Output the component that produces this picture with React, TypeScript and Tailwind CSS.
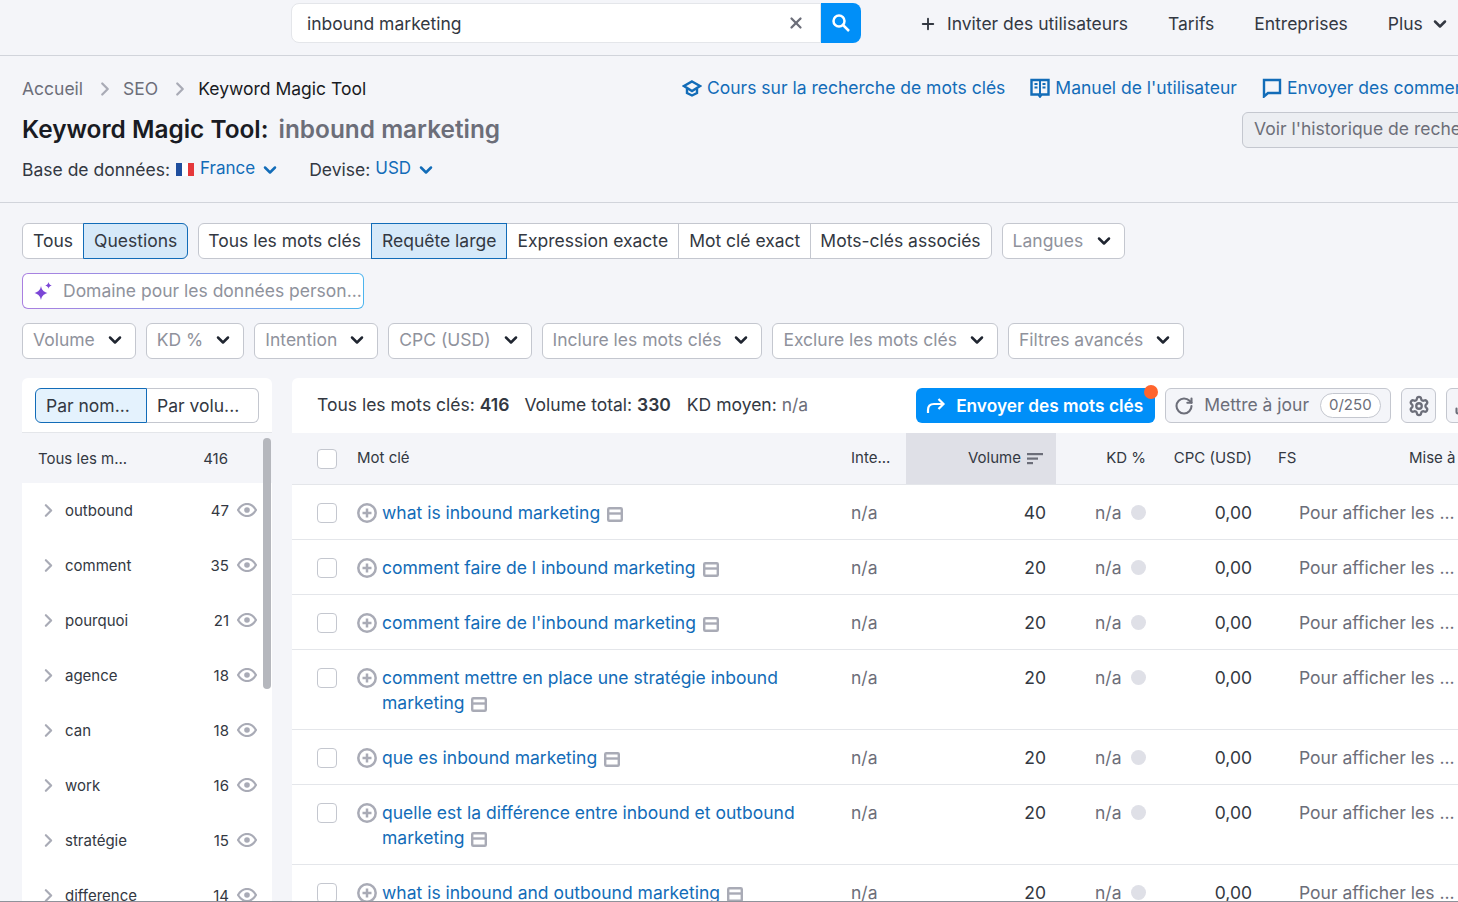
import { ChevronDown, ChevronRight, Download, Plus, RotateCw, Settings, X } from "lucide-react";

const linkBlue = "text-[#126cb8]";

function Caret({ className = "text-[#1f2530]" }: { className?: string }) {
  return <ChevronDown className={`h-5 w-5 shrink-0 ${className}`} strokeWidth={3} />;
}

function SerpIcon() {
  return (
    <svg viewBox="0 0 16 15" className="ml-[7px] inline-block h-[15px] w-[16px] align-[-3px]" fill="none" stroke="#a9abb6" strokeWidth="2.400">
      <rect x="1.200" y="1.200" width="13.600" height="12.600" rx="1" />
      <path d="M1 6.500h14" />
    </svg>
  );
}

function AddIcon() {
  return (
    <svg viewBox="0 0 20 20" className="mr-[5px] mt-[3px] h-5 w-5 shrink-0" fill="none" stroke="#a9abb6" strokeWidth="2.500">
      <circle cx="10" cy="10" r="8.700" />
      <path d="M10 5.500v9M5.500 10h9" />
    </svg>
  );
}

function EyeIcon() {
  return (
    <svg viewBox="0 0 20 14" className="mb-[2px] ml-[8px] h-[14px] w-5 shrink-0" fill="none" stroke="#a9abb6" strokeWidth="2.200">
      <path d="M1 7c2.500-4 5.500-6 9-6s6.500 2 9 6c-2.500 4-5.500 6-9 6s-6.500-2-9-6Z" />
      <circle cx="10" cy="7" r="2.800" fill="#a9abb6" stroke="none" />
    </svg>
  );
}

function Checkbox() {
  return <span className="block h-5 w-5 rounded-[4px] border border-[#c4c7cf] bg-white" />;
}

const groups = [
  ["outbound", "47"],
  ["comment", "35"],
  ["pourquoi", "21"],
  ["agence", "18"],
  ["can", "18"],
  ["work", "16"],
  ["stratégie", "15"],
  ["difference", "14"],
];

const rows = [
  { kw: "what is inbound marketing", vol: "40", h: "h-[55px]" },
  { kw: "comment faire de l inbound marketing", vol: "20", h: "h-[55px]" },
  { kw: "comment faire de l'inbound marketing", vol: "20", h: "h-[55px]" },
  { kw: "comment mettre en place une stratégie inbound marketing", vol: "20", h: "h-[80px]" },
  { kw: "que es inbound marketing", vol: "20", h: "h-[55px]" },
  { kw: "quelle est la différence entre inbound et outbound marketing", vol: "20", h: "h-[80px]" },
  { kw: "what is inbound and outbound marketing", vol: "20", h: "h-[55px]" },
];

export default function App() {
  return (
    <div className="h-[902px] w-[1458px] overflow-hidden border-b border-[#8f929a] bg-[#f4f5f9] font-['Inter',sans-serif] text-[17.5px] text-[#333842]">
      <header className="flex h-[56px] items-start border-b border-[#d1d4db] pl-[291px] pt-[3px]">
        <div className="flex h-10 w-[530px] items-center justify-between rounded-l-[8px] border border-[#e4e6ea] bg-white pl-[15px] pr-[15px]">
          <span className="pt-[2px]">inbound marketing</span>
          <X className="h-[18px] w-[18px] text-[#6c6e79]" strokeWidth={3} />
        </div>
        <div className="flex h-10 w-10 items-center justify-center rounded-r-[8px] bg-[#008ff8]">
          <svg viewBox="0 0 20 20" className="h-5 w-5" fill="none" stroke="#fff" strokeWidth="2.500">
            <circle cx="8" cy="8" r="5.500" />
            <path d="m12 12 6 6" />
          </svg>
        </div>
        <nav className="flex h-10 items-center whitespace-nowrap pl-[58px] pt-[2px]">
          <Plus className="mr-[10px] h-[18px] w-[18px]" strokeWidth={2.5} />
          <span className="mr-[40px]">Inviter des utilisateurs</span>
          <span className="mr-[40px]">Tarifs</span>
          <span className="mr-[40px]">Entreprises</span>
          <span className="mr-[7px]">Plus</span>
          <Caret className="text-[#333842]" />
        </nav>
      </header>

      <section className="flex h-[147px] border-b border-[#d1d4db] px-[22px] pt-[20px]">
        <div className="w-[660px] shrink-0 pt-px">
          <div className="flex h-6 items-center text-[#6c6e79]">
            <span>Accueil</span>
            <ChevronRight className="ml-[11px] mr-[7px] h-[22px] w-[22px] text-[#a9abb6]" strokeWidth={2.5} />
            <span>SEO</span>
            <ChevronRight className="ml-[11px] mr-[7px] h-[22px] w-[22px] text-[#a9abb6]" strokeWidth={2.5} />
            <span className="text-[#191b23]">Keyword Magic Tool</span>
          </div>
          <h1 className="mt-[10px] flex h-9 items-center text-[24.400px] font-semibold text-[#191b23]">
            Keyword Magic Tool:
            <span className="ml-[10px] text-[#6c6e79]">inbound marketing</span>
          </h1>
          <div className="mt-[9px] flex items-center">
            <span>Base de données:</span>
            <svg viewBox="0 0 18 13" className="ml-[6px] mr-[6px] h-[13px] w-[18px]">
              <rect width="6" height="13" fill="#1f4e9e" />
              <rect x="6" width="6" height="13" fill="#fff" />
              <rect x="12" width="6" height="13" fill="#e5383b" />
            </svg>
            <span className={`pb-[2px] text-[17px] ${linkBlue}`}>France</span>
            <Caret className={`ml-[5px] ${linkBlue}`} />
            <span className="ml-[29px]">Devise:</span>
            <span className={`ml-[5px] pb-[2px] text-[17px] ${linkBlue}`}>USD</span>
            <Caret className={`ml-[5px] ${linkBlue}`} />
          </div>
        </div>
        <div className="whitespace-nowrap">
          <div className={`flex h-6 items-center ${linkBlue}`}>
            <svg viewBox="0 0 20 20" className="mr-[5px] h-5 w-5" fill="none" stroke="#126cb8" strokeWidth="2.400">
              <path d="M10 3.500 18 8l-8 5-8-5 8-4.500Z" />
              <path d="M5 10.500v4.500l5 2.500 5-2.500v-4.500" />
            </svg>
            <span className="mr-[25px]">Cours sur la recherche de mots clés</span>
            <svg viewBox="0 0 20 20" className="mr-[5px] h-5 w-5" fill="none" stroke="#126cb8" strokeWidth="2.400">
              <path d="M1.500 2h17v14.500h-7l-1.500 2-1.500-2h-7V2Z" />
              <path d="M10 2v14M4.500 6h3M4.500 9.500h3M12.500 6h3M12.500 9.500h3" strokeWidth="2" />
            </svg>
            <span className="mr-[25px]">Manuel de l'utilisateur</span>
            <svg viewBox="0 0 20 20" className="mr-[5px] h-5 w-5" fill="none" stroke="#126cb8" strokeWidth="2.400">
              <path d="M2 2h16v13H6l-4 3.500V2Z" />
            </svg>
            <span>Envoyer des commentaires</span>
          </div>
          <div className="ml-[560px] mt-[12px] flex h-[36px] w-[300px] items-center rounded-[6px] border border-[#c4c7cf] bg-[#eceef2] pb-[2px] pl-[11px] text-[#6c6e79]">
            Voir l'historique de recherche
          </div>
        </div>
      </section>

      <div className="px-[22px] pt-[20px]">
        <div className="flex h-9 whitespace-nowrap">
          <div className="flex rounded-[6px] border border-[#c4c7cf] bg-white">
            <span className="flex items-center pl-[10px] pr-[11px]">Tous</span>
            <span className="-m-px flex items-center rounded-r-[6px] border border-[#126cb8] bg-[#d6e9f9] px-[10px]">Questions</span>
          </div>
          <div className="ml-[10px] flex rounded-[6px] border border-[#c4c7cf] bg-white">
            <span className="flex items-center pl-[9px] pr-[10px]">Tous les mots clés</span>
            <span className="-my-px flex items-center border border-[#126cb8] bg-[#d6e9f9] px-[10px]">Requête large</span>
            <span className="flex items-center border-r border-[#c4c7cf] px-[10px]">Expression exacte</span>
            <span className="flex items-center border-r border-[#c4c7cf] px-[10px]">Mot clé exact</span>
            <span className="flex items-center pl-[9px] pr-[10px]">Mots-clés associés</span>
          </div>
          <div className="ml-[10px] flex w-[123px] items-center justify-between rounded-[6px] border border-[#c4c7cf] bg-white px-[10px] text-[#8f929c]">
            Langues
            <Caret />
          </div>
        </div>

        <div className="mt-[14px] h-[36px] w-[342px] rounded-[6px] bg-gradient-to-r from-[#a97fe0] to-[#4cb4ee] p-px">
          <div className="flex h-full items-center rounded-[5px] bg-white pl-[10px] text-[#8f929c]">
            <svg viewBox="0 0 20 20" className="mr-[10px] h-5 w-5 shrink-0" fill="#7b46d6">
              <path d="M8 5c.7 3.800 2.200 5.500 6.500 7-4.300 1.500-5.800 3.200-6.500 7-.7-3.800-2.200-5.500-6.500-7C5.800 10.500 7.300 8.800 8 5Z" />
              <path d="M15.500 1c.4 2 1.200 2.800 3.300 3.400-2.100.6-2.900 1.400-3.300 3.400-.4-2-1.200-2.800-3.300-3.400 2.100-.6 2.900-1.400 3.300-3.400Z" />
            </svg>
            <span className="whitespace-nowrap">Domaine pour les données person...</span>
          </div>
        </div>

        <div className="mt-[14px] flex h-9 gap-[10px] whitespace-nowrap text-[#8f929c]">
          {["Volume", "KD %", "Intention", "CPC (USD)", "Inclure les mots clés", "Exclure les mots clés", "Filtres avancés"].map((f) => (
            <div key={f} className="flex items-center gap-[10px] rounded-[6px] border border-[#c4c7cf] bg-white pb-[2px] pl-[10px] pr-[10px]">
              {f}
              <Caret />
            </div>
          ))}
        </div>

        <div className="mt-[19px] flex gap-[20px]">
          <aside className="w-[250px] shrink-0 rounded-t-[6px] bg-white">
            <div className="flex h-[55px] items-start border-b border-[#e4e6ea] px-[13px] pt-[10px]">
              <span className="flex h-[35px] w-[112px] items-center rounded-l-[6px] border border-[#126cb8] bg-[#e4f2fd] pl-[10px] pt-px">Par nom...</span>
              <span className="flex h-[35px] w-[112px] items-center rounded-r-[6px] border border-l-0 border-[#c4c7cf] pl-[10px] pt-px">Par volu...</span>
            </div>
            <div className="relative text-[15px]">
              <div className="flex h-[50px] items-center justify-between bg-[#f4f5f9] pl-4 pr-[44px] pt-[2px]">
                <span>Tous les m...</span>
                <span>416</span>
              </div>
              {groups.map(([name, count]) => (
                <div key={name} className="flex h-[55px] items-center pl-[16px] pr-[15px] pt-px">
                  <ChevronRight className="mb-[2px] h-[21px] w-[21px] shrink-0 text-[#a9abb6]" strokeWidth={2.5} />
                  <span className="ml-[6px] flex-1">{name}</span>
                  <span>{count}</span>
                  <EyeIcon />
                </div>
              ))}
              <div className="absolute right-px top-[5px] h-[251px] w-2 rounded-full bg-[#b5b7bd]" />
            </div>
          </aside>

          <main className="w-[1200px] shrink-0 rounded-t-[6px] bg-white">
            <div className="flex h-[55px] items-center whitespace-nowrap pl-[25px]">
              <span>Tous les mots clés: <b className="font-semibold">416</b></span>
              <span className="ml-[15px]">Volume total: <b className="font-semibold">330</b></span>
              <span className="ml-[16px]">KD moyen: <span className="text-[#6c6e79]">n/a</span></span>
              <div className="relative ml-[108px] flex h-[35px] w-[239px] shrink-0 items-center rounded-[6px] bg-[#008ff8] pl-[10px] text-[17.300px] font-semibold text-white">
                <svg viewBox="0 0 20 20" className="mr-[10px] h-5 w-5" fill="none" stroke="#fff" strokeWidth="2.200">
                  <path d="M2 17v-3c0-4 2.500-6 6-6h9M12.500 3l5 5-5 5" />
                </svg>
                Envoyer des mots clés
                <span className="absolute -right-[3px] -top-[3px] h-[14px] w-[14px] rounded-full bg-[#ff642d]" />
              </div>
              <div className="ml-[10px] flex h-[35px] w-[226px] shrink-0 items-center rounded-[6px] border border-[#c4c7cf] bg-[#f4f5f9] pl-[8px] text-[#6c6e79]">
                <RotateCw className="mr-[10px] h-5 w-5" strokeWidth={2.5} />
                Mettre à jour
                <span className="ml-[11px] rounded-full border border-[#c4c7cf] bg-white px-[8px] text-[15px]">0/250</span>
              </div>
              <div className="ml-[10px] flex h-[35px] w-[35px] shrink-0 items-center justify-center rounded-[6px] border border-[#c4c7cf] bg-[#f4f5f9] text-[#6c6e79]">
                <Settings className="h-[22px] w-[22px]" strokeWidth={2.5} />
              </div>
              <div className="ml-[10px] flex h-[35px] w-[35px] shrink-0 items-center justify-center rounded-[6px] border border-[#c4c7cf] bg-[#f4f5f9] text-[#6c6e79]">
                <Download className="h-5 w-5" strokeWidth={2.5} />
              </div>
            </div>

            <div className="flex h-[52px] items-stretch border-b border-[#e4e6ea] bg-[#f4f5f9] text-[15px]">
              <div className="flex w-[65px] items-center pl-[25px]"><Checkbox /></div>
              <div className="flex w-[494px] items-center">Mot clé</div>
              <div className="flex w-[55px] items-center">Inte...</div>
              <div className="flex w-[150px] items-center justify-end bg-[#dfe0e7] pr-[13px]">
                Volume
                <svg viewBox="0 0 16 12" className="ml-[6px] h-3 w-4" fill="#6c6e79">
                  <rect width="16" height="2.200" />
                  <rect y="4.500" width="11" height="2.200" />
                  <rect y="9" width="6" height="2.200" />
                </svg>
              </div>
              <div className="flex w-[90px] items-center justify-end">KD %</div>
              <div className="flex w-[106px] items-center justify-end">CPC (USD)</div>
              <div className="flex w-[157px] items-center pl-[26px]">FS</div>
              <div className="flex items-center whitespace-nowrap">Mise à</div>
            </div>

            {rows.map((r) => (
              <div key={r.kw} className={`flex ${r.h} items-start border-b border-[#e4e6ea] pt-[15px]`}>
                <div className="mt-[3px] w-[65px] pl-[25px]"><Checkbox /></div>
                <div className="flex w-[494px]">
                  <AddIcon />
                  <span className={`w-[430px] leading-[25px] ${linkBlue}`}>
                    {r.kw}
                    <SerpIcon />
                  </span>
                </div>
                <div className="w-[55px] text-[#6c6e79]">n/a</div>
                <div className="w-[150px] pr-[10px] text-right">{r.vol}</div>
                <div className="flex w-[90px] items-center pl-[39px] text-[#6c6e79]">
                  n/a
                  <span className="mb-px ml-[10px] h-[15px] w-[15px] shrink-0 rounded-full bg-[#dfe0e7]" />
                </div>
                <div className="w-[106px] text-right">0,00</div>
                <div className="ml-[47px] whitespace-nowrap text-[#6c6e79]">Pour afficher les ...</div>
              </div>
            ))}
          </main>
        </div>
      </div>
    </div>
  );
}
